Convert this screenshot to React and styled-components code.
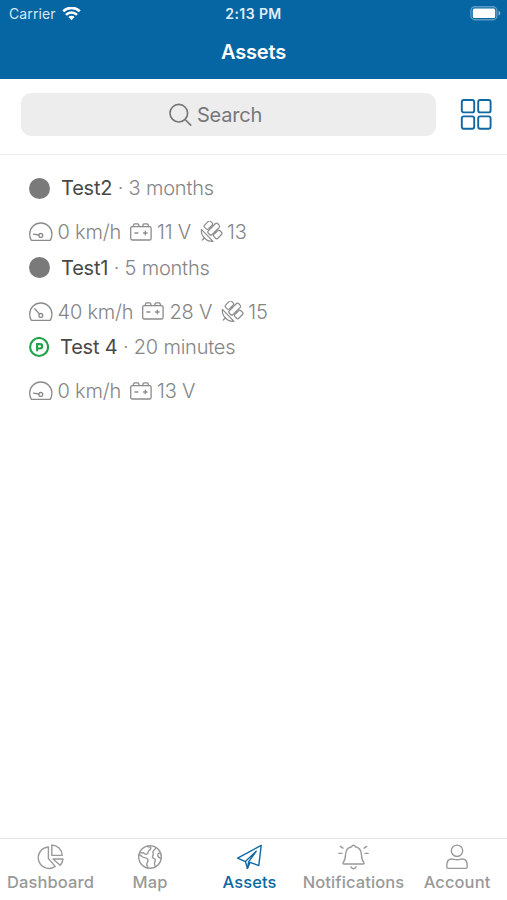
import React from "react";
import styled, { createGlobalStyle } from "styled-components";

const assets = [
  {
    name: "Test2",
    status: "offline",
    since: "3 months",
    speed: 0,
    voltage: 11,
    satellites: 13,
  },
  {
    name: "Test1",
    status: "offline",
    since: "5 months",
    speed: 40,
    voltage: 28,
    satellites: 15,
  },
  {
    name: "Test 4",
    status: "parked",
    since: "20 minutes",
    speed: 0,
    voltage: 13,
  },
];

const WifiIcon = () => (
  <svg width="19" height="14" viewBox="0 0 19 14">
    <g fill="none" stroke="#fff" strokeWidth="2.6">
      <path d="M1.2 4.2a12 12 0 0 1 16.6 0" />
      <path d="M4 7.8a7.8 7.8 0 0 1 11 0" />
    </g>
    <path d="M9.5 13.2 6.4 10a4.4 4.4 0 0 1 6.2 0z" fill="#fff" />
  </svg>
);

const BatteryLevelIcon = () => (
  <svg width="31" height="15" viewBox="0 0 31 15">
    <rect
      x="0.9"
      y="0.7"
      width="26"
      height="13"
      rx="4"
      fill="none"
      stroke="#fff"
      strokeOpacity="0.35"
      strokeWidth="1.4"
    />
    <rect x="2.8" y="2.4" width="22.4" height="9.6" rx="1.6" fill="#fff" />
    <path d="M28.5 4.8c2.4.8 2.4 4 0 4.8z" fill="#fff" fillOpacity="0.5" />
  </svg>
);

const SearchIcon = () => (
  <svg width="24" height="24" viewBox="0 0 24 24">
    <g fill="none" stroke="#747476" strokeWidth="1.6" strokeLinecap="round">
      <circle cx="10.8" cy="10.2" r="8.8" />
      <path d="m17.1 16.5 5.6 5.6" />
    </g>
  </svg>
);

const GridIcon = () => (
  <svg width="32" height="32" viewBox="0 0 32 32">
    <g fill="none" stroke="#0f68a4" strokeWidth="1.9">
      <rect x="1.8" y="2" width="12.4" height="12.4" rx="2" />
      <rect x="18.2" y="2" width="12.4" height="12.4" rx="2" />
      <rect x="1.8" y="18.4" width="12.4" height="12.4" rx="2" />
      <rect x="18.2" y="18.4" width="12.4" height="12.4" rx="2" />
    </g>
  </svg>
);

const ParkedIcon = () => (
  <svg width="20" height="21" viewBox="0 0 20 21">
    <g fill="none" stroke="#1fa34a">
      <circle cx="10.1" cy="10" r="9" strokeWidth="2.1" />
      <path d="M8.1 14.2V7.1h2.9a2.2 2.2 0 0 1 0 4.4H8.1" strokeWidth="2.1" />
    </g>
  </svg>
);

const SpeedIcon = ({ moving }) => (
  <svg width="24" height="20" viewBox="0 0 24 20">
    <g
      fill="none"
      stroke="#8c8c8c"
      strokeWidth="1.3"
      strokeLinecap="round"
      strokeLinejoin="round"
    >
      <path d="M2.4 18.4A11.2 11.2 0 0 1 .7 12.2 11.1 11.1 0 0 1 11.8 1a11.1 11.1 0 0 1 11.1 11.2c0 2.3-.6 4.5-1.7 6.2z" />
      <circle cx="11.8" cy="13.4" r="1.9" />
      {moving ? (
        <path d="M10.5 12 5.7 6.8" />
      ) : (
        <path d="m9.9 13-5.4-.9" />
      )}
    </g>
  </svg>
);

const CarBatteryIcon = () => (
  <svg width="23" height="19" viewBox="0 0 23 19">
    <g
      fill="none"
      stroke="#8c8c8c"
      strokeWidth="1.3"
      strokeLinecap="round"
      strokeLinejoin="round"
    >
      <rect x="0.7" y="3.6" width="20.4" height="13.4" rx="1.6" />
      <path d="M3.1 3.6l.6-1.8c.2-.6.5-.9 1.1-.9h2.8c.6 0 .9.3 1.1.9l.6 1.800M12.500 3.600l.6-1.800c.2-.6.5-.9 1.100-.9h2.800c.6 0 .9.3 1.100.9l.6 1.800" />
      <path d="M4.900 10h3M13.500 10h3.600M15.300 8.200v3.600" />
    </g>
  </svg>
);

const SatelliteIcon = () => (
  <svg width="23" height="22" viewBox="0 0 23 22">
    <g
      fill="none"
      stroke="#8c8c8c"
      strokeWidth="1.2"
      strokeLinecap="round"
      strokeLinejoin="round"
    >
      {/* solar panels and the body between them */}
      <g transform="rotate(-45 11 11)">
        <rect x="9.8" y="1.6" width="8.4" height="5.4" rx="1.6" />
        <rect x="8.2" y="8.2" width="13.4" height="5.4" rx="1.8" />
        <rect x="9.8" y="14.8" width="8.4" height="5.400" rx="1.600" />
        <path d="M14 7v1.200M14 13.600v1.200" />
      </g>
      {/* dish */}
      <path d="M1.400 8.400C.8 15 6 20.800 13 20.400z" />
      <path d="m4.600 16.800-2.400 2.200" />
    </g>
  </svg>
);

const DashboardIcon = () => (
  <>
    <path d="M11.4 3A10.7 10.7 0 1 0 18.2 22.400L11.400 14.600z" />
    <path d="M14.8 1v10.400h10.400C25 5.600 20.500 1.200 14.800 1z" />
    <path d="M16 15h10c-.2 2.400-1.200 4.500-2.900 6.200z" />
  </>
);

const MapIcon = () => (
  <>
    <circle cx="14" cy="13" r="11.3" />
    <path d="M11 2.2c1.200.3 2.200 1 3.600 1 .8 1.600-.4 2.600-1.800 3.500-1 .7-.4 2.500-1.600 3.300-1.600 1-2.800-1-4.400-1.200-1.400-.2-2.200.4-3.200-.2" />
    <path d="M3.2 10.800c2 .4 3.200 2.600 5.200 2.800 1.800.2 3.800.8 3.600 2.800-.2 1.800-1.600 2.600-1.200 4.600.2 1 .6 1.800 1.200 2.800" />
    <path d="M20 3.600c-.6 1.800-2.400 2.400-3 4-.4 1.400 1 2.800-.2 4.200-.8 1.200.2 2.600 1.600 2.800 1.400.3.8 2.400.2 3.800-.6 1.600.4 3 .8 4.200" />
    <path d="M24.600 9c-1.800-.2-3 .8-2.800 2.400.2 1.600 1.600 2.600 3.200 3" />
  </>
);

const AssetsIcon = () => (
  <>
    <path d="M1.6 14.200 25.200 1.400 22.800 21.600 14 18.400 11.400 24.400 9.400 17.600z" />
    <path d="M20.200 7.200 9.400 17.600M20.200 7.200 12.600 17.800 11.400 24.400" />
  </>
);

const NotificationsIcon = () => (
  <>
    <path d="M3.9 20c-.9 0-1.3-.9-.7-1.600C4.900 16.500 5.300 15 5.500 11c.2-4.600 2.600-7.600 6.300-8.200.1-1 .7-1.500 1.700-1.500s1.600.5 1.700 1.500c3.700.6 6.100 3.600 6.300 8.200.2 4 .6 5.500 2.300 7.400.6.7.2 1.600-.7 1.600z" />
    <path d="M10.9 22.800c.5 1.200 1.400 1.900 2.600 1.900s2.100-.7 2.600-1.900" />
    <path d="M2.9 4.200.3 2.400M1.900 9.400h-3M24.100 4.200l2.600-1.800M25.100 9.400h3" />
  </>
);

const AccountIcon = () => (
  <>
    <circle cx="14" cy="6.8" r="5.7" />
    <path d="M3.8 21.400c0-4.200 2-6.400 4.800-6.400 1.800 0 3.200.8 5.400.8s3.600-.8 5.400-.8c2.800 0 4.800 2.200 4.800 6.400v1.400c0 1-.6 1.600-1.600 1.600H5.400c-1 0-1.600-.6-1.600-1.600z" />
  </>
);

const tabs = [
  { label: "Dashboard", Icon: DashboardIcon, width: 101 },
  { label: "Map", Icon: MapIcon, width: 98 },
  { label: "Assets", Icon: AssetsIcon, width: 101, active: true },
  { label: "Notifications", Icon: NotificationsIcon, width: 107 },
  { label: "Account", Icon: AccountIcon, width: 100 },
];

const AssetItem = ({ asset }) => {
  const { name, status, since, speed, voltage, satellites } = asset;

  return (
    <Item>
      <ItemHeader>
        {status === "parked" ? <ParkedIcon /> : <StatusDot />}
        <ItemTitle>
          <Name>{name}</Name> · {since}
        </ItemTitle>
      </ItemHeader>
      <Metrics>
        <Metric>
          <SpeedIcon moving={speed > 0} />
          {speed} km/h
        </Metric>
        <Metric>
          <CarBatteryIcon />
          {voltage} V
        </Metric>
        {satellites && (
          <Metric>
            <SatelliteIcon />
            {satellites}
          </Metric>
        )}
      </Metrics>
    </Item>
  );
};

const App = () => {
  return (
    <Wrapper>
      <GlobalStyle />
      <Header>
        <StatusBar>
          <Carrier>
            Carrier
            <WifiIcon />
          </Carrier>
          <Time>2:13 PM</Time>
          <BatteryLevel>
            <BatteryLevelIcon />
          </BatteryLevel>
        </StatusBar>
        <Title>Assets</Title>
      </Header>
      <Toolbar>
        <SearchField>
          <SearchIcon />
          Search
        </SearchField>
        <GridIcon />
      </Toolbar>
      <List>
        {assets.map((asset) => (
          <AssetItem key={asset.name} asset={asset} />
        ))}
      </List>
      <TabBar>
        {tabs.map(({ label, Icon, width, active }) => (
          <Tab key={label} $width={width} $active={active}>
            <TabIcon viewBox="0 0 28 26">
              <Icon />
            </TabIcon>
            {label}
          </Tab>
        ))}
      </TabBar>
    </Wrapper>
  );
};

const GlobalStyle = createGlobalStyle`
  * {
    box-sizing: border-box;
  }

  body {
    margin: 0;
    background: #ffffff;
    font-family: Inter, "Liberation Sans", sans-serif;
  }

  svg {
    display: block;
    flex-shrink: 0;
  }
`;

const Wrapper = styled.div`
  display: flex;
  flex-direction: column;
  height: 100vh;
  overflow: hidden;
`;

const Header = styled.header`
  height: 79px;
  background: #0666a3;
  color: #ffffff;
`;

const StatusBar = styled.div`
  display: grid;
  grid-template-columns: 1fr auto 1fr;
  align-items: center;
  height: 27px;
  padding: 0 6px 0 9px;
`;

const Carrier = styled.div`
  display: flex;
  align-items: center;
  gap: 6px;
  font-size: 14px;
  letter-spacing: 0.1px;
  color: #d6e8f4;
`;

const Time = styled.div`
  font-size: 14px;
  font-weight: 600;
  letter-spacing: 0.4px;
  margin: 0 3px 0 0;
  color: #e0eef8;
`;

const BatteryLevel = styled.div`
  display: flex;
  justify-content: flex-end;
`;

const Title = styled.h1`
  margin: 0;
  font-size: 20px;
  font-weight: 600;
  line-height: 50px;
  letter-spacing: -0.2px;
  text-align: center;
`;

const Toolbar = styled.div`
  display: flex;
  align-items: center;
  gap: 24px;
  height: 76px;
  padding: 0 15px 5px 21px;
  border-bottom: 1px solid #ececec;
`;

const SearchField = styled.div`
  display: flex;
  flex: 1;
  align-items: center;
  justify-content: center;
  gap: 5px;
  height: 43px;
  padding: 1px 27px 0 0;
  border-radius: 10px;
  background: #ededed;
  color: #77777a;
  font-size: 20px;
  letter-spacing: -0.2px;
`;

const List = styled.main`
  flex: 1;
  padding: 12px 29px;
`;

const Item = styled.section`
  height: 79.5px;
`;

const ItemHeader = styled.div`
  display: flex;
  align-items: center;
  gap: 11px;
  height: 42px;
`;

const StatusDot = styled.div`
  width: 21px;
  height: 21px;
  border-radius: 50%;
  background: #7a7a7a;
`;

const ItemTitle = styled.div`
  font-size: 20px;
  font-weight: 300;
  letter-spacing: -0.2px;
  color: #858585;
`;

const Name = styled.span`
  font-weight: 400;
  color: #484848;
`;

const Metrics = styled.div`
  display: flex;
  align-items: center;
  gap: 8.5px;
  height: 46px;
`;

const Metric = styled.div`
  display: flex;
  align-items: center;
  gap: 4.5px;
  font-size: 20px;
  font-weight: 300;
  letter-spacing: -0.2px;
  color: #858585;
`;

const TabBar = styled.nav`
  display: flex;
  height: 62px;
  border-top: 1px solid #e6e6e6;
`;

const Tab = styled.div`
  display: flex;
  flex-direction: column;
  align-items: center;
  gap: 2px;
  width: ${(props) => props.$width}px;
  padding-top: 5px;
  font-size: 16.5px;
  font-weight: 500;
  line-height: 20px;
  letter-spacing: 0.1px;
  white-space: nowrap;
  color: ${(props) => (props.$active ? "#0f68a4" : "#999999")};
`;

const TabIcon = styled.svg`
  width: 28px;
  height: 26px;
  overflow: visible;
  fill: none;
  stroke: currentColor;
  stroke-width: 1.4;
  stroke-linecap: round;
  stroke-linejoin: round;
`;

export default App;
